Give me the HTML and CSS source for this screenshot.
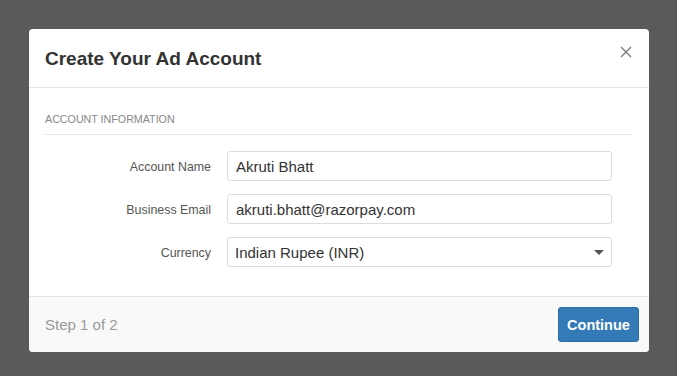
FILE: index.html
```html
<!DOCTYPE html>
<html lang="en">
<head>
<meta charset="utf-8">
<title>Create Your Ad Account</title>
<link rel="stylesheet" href="styles.css">
</head>
<body>
<div class="modal">
  <div class="modal-header">
    <h2 class="modal-title">Create Your Ad Account</h2>
    <button class="close" type="button" aria-label="Close">
      <svg width="12" height="12" viewBox="0 0 12 12"><path d="M1 1L11 11M11 1L1 11" stroke="#777" stroke-width="1.3" fill="none"/></svg>
    </button>
  </div>
  <div class="modal-body">
    <div class="section-title">ACCOUNT INFORMATION</div>
    <form class="form">
      <label class="label" for="name">Account Name</label>
      <input class="control" id="name" type="text" value="Akruti Bhatt">
      <label class="label" for="email">Business Email</label>
      <input class="control" id="email" type="text" value="akruti.bhatt@razorpay.com">
      <label class="label" for="cur">Currency</label>
      <div class="select-wrap">
        <select class="control select" id="cur"><option>Indian Rupee (INR)</option></select>
        <svg class="caret" width="10" height="5" viewBox="0 0 10 5"><path d="M0 0H10L5 5Z" fill="#555"/></svg>
      </div>
    </form>
  </div>
  <div class="modal-footer">
    <span class="step">Step 1 of 2</span>
    <button class="btn" type="button">Continue</button>
  </div>
</div>
</body>
</html>
```
FILE: styles.css
```css
html, body {
  margin: 0;
  padding: 0;
}
body {
  background: #5a5a5a;
  font-family: "Liberation Sans", Arial, sans-serif;
  color: #333;
  width: 677px;
  height: 376px;
  overflow: hidden;
}
.modal {
  margin: 29px 0 0 29px;
  width: 620px;
  background: #fff;
  border-radius: 4px;
  overflow: hidden;
}
.modal-header {
  display: flex;
  justify-content: space-between;
  align-items: flex-start;
  padding: 16px 16px 14px 16px;
  border-bottom: 1px solid #e5e5e5;
}
.modal-title {
  margin: 0;
  font-size: 19px;
  line-height: 28px;
  font-weight: bold;
  color: #333;
}
.close {
  border: 0;
  background: none;
  padding: 0;
  margin: 1px 1px 0 0;
  width: 12px;
  height: 12px;
  display: flex;
  cursor: pointer;
}
.modal-body {
  padding: 24px 16px 29px 16px;
}
.section-title {
  font-size: 10.7px;
  line-height: 14px;
  color: #888;
  padding-bottom: 8px;
  border-bottom: 1px solid #e5e5e5;
}
.form {
  margin: 16px 0 0 0;
  display: grid;
  grid-template-columns: 166px 385px;
  column-gap: 16px;
  row-gap: 13px;
  align-items: center;
}
.label {
  text-align: right;
  font-size: 12.4px;
  color: #555;
  padding-top: 2px;
}
.control {
  box-sizing: border-box;
  width: 385px;
  height: 30px;
  margin: 0;
  padding: 0 8px;
  border: 1px solid #ddd;
  border-radius: 3px;
  font-family: "Liberation Sans", Arial, sans-serif;
  font-size: 15px;
  color: #333;
  background: #fff;
  outline: none;
}
.select-wrap {
  position: relative;
  width: 385px;
  height: 30px;
}
.select {
  appearance: none;
  -webkit-appearance: none;
  padding-left: 7px;
}
.caret {
  position: absolute;
  right: 8px;
  top: 13px;
  pointer-events: none;
}
.modal-footer {
  display: flex;
  justify-content: space-between;
  align-items: center;
  padding: 10px 10px 10px 16px;
  background: #f9f9f9;
  border-top: 1px solid #e5e5e5;
}
.step {
  font-size: 15px;
  color: #999;
}
.btn {
  box-sizing: border-box;
  height: 35px;
  width: 81px;
  padding: 0;
  background: #337ab7;
  border: 1px solid #2e6da4;
  border-radius: 3px;
  color: #fff;
  font-family: "Liberation Sans", Arial, sans-serif;
  font-size: 14.5px;
  font-weight: bold;
  cursor: pointer;
}
```
